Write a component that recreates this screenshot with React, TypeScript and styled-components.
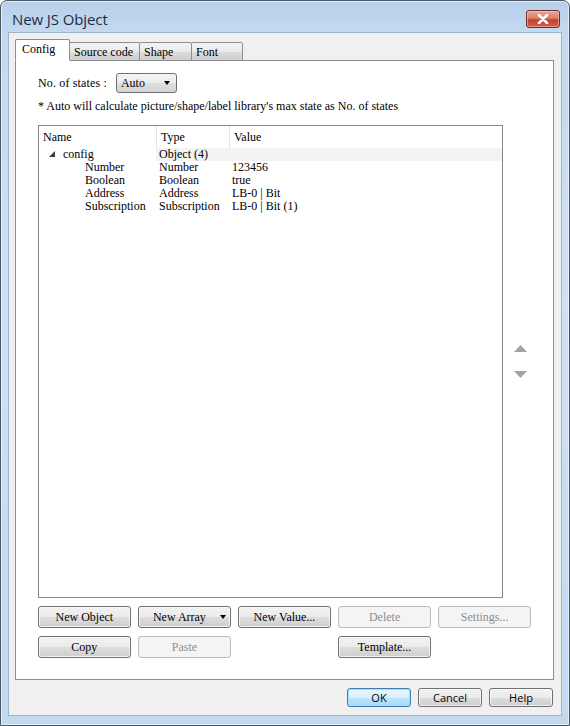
import React from 'react';
import styled, { createGlobalStyle } from 'styled-components';

type Row = {
  name: string;
  type: string;
  value: string;
  depth: number;
  expanded?: boolean;
};

const rows: Row[] = [
  { name: 'config', type: 'Object (4)', value: '', depth: 0, expanded: true },
  { name: 'Number', type: 'Number', value: '123456', depth: 1 },
  { name: 'Boolean', type: 'Boolean', value: 'true', depth: 1 },
  { name: 'Address', type: 'Address', value: 'LB-0 | Bit', depth: 1 },
  { name: 'Subscription', type: 'Subscription', value: 'LB-0 | Bit (1)', depth: 1 },
];

const tabs = ['Config', 'Source code', 'Shape', 'Font'];

const GlobalStyle = createGlobalStyle`
  html, body {
    margin: 0;
    padding: 0;
    overflow: hidden;
    background: #ffffff;
  }
  * {
    box-sizing: border-box;
  }
`;

const App: React.FC = () => {
  return (
    <>
      <GlobalStyle />
      <Window>
        <TitleBar>
          <Title>New JS Object</Title>
          <CloseButton aria-label="Close">
            <svg width="12" height="10" viewBox="0 0 12 10">
              <path
                d="M2 1 L10 9 M10 1 L2 9"
                stroke="#ffffff"
                strokeWidth="2.6"
                strokeLinecap="round"
              />
            </svg>
          </CloseButton>
        </TitleBar>

        <Client>
          <TabStrip>
            {tabs.map((tab, i) => (
              <Tab key={tab} active={i === 0} width={[55, 71, 53, 52][i]}>
                {tab}
              </Tab>
            ))}
          </TabStrip>

          <Panel>
            <StatesRow>
              <Label>No. of states :</Label>
              <Select>
                <span>Auto</span>
                <DropArrow />
              </Select>
            </StatesRow>
            <Note>* Auto will calculate picture/shape/label library's max state as No. of states</Note>

            <ListRow>
              <ListBox>
                <HeaderRow>
                  <NameCol>Name</NameCol>
                  <TypeCol divider>Type</TypeCol>
                  <ValueCol divider>Value</ValueCol>
                </HeaderRow>
                <Rows>
                  {rows.map((row) => (
                    <DataRow key={row.name}>
                      <NameCell depth={row.depth}>
                        {row.expanded && (
                          <Expander width="6" height="6" viewBox="0 0 6 6">
                            <polygon points="0,6 6,0 6,6" fill="#3a3a3a" />
                          </Expander>
                        )}
                        {row.name}
                      </NameCell>
                      <TypeCell shaded={row.depth === 0}>{row.type}</TypeCell>
                      <ValueCell shaded={row.depth === 0}>{row.value}</ValueCell>
                    </DataRow>
                  ))}
                </Rows>
              </ListBox>
              <MoveColumn>
                <svg width="13" height="7" viewBox="0 0 13 7">
                  <polygon points="0,7 6.5,0 13,7" fill="#a3a3a3" />
                </svg>
                <svg width="13" height="7" viewBox="0 0 13 7">
                  <polygon points="0,0 13,0 6.5,7" fill="#a3a3a3" />
                </svg>
              </MoveColumn>
            </ListRow>

            <ButtonGrid>
              <PanelButton>New Object</PanelButton>
              <PanelButton>
                <span>New Array</span>
                <SplitArrow />
              </PanelButton>
              <PanelButton>New Value...</PanelButton>
              <PanelButton disabled>Delete</PanelButton>
              <PanelButton disabled>Settings...</PanelButton>
              <PanelButton>Copy</PanelButton>
              <PanelButton disabled>Paste</PanelButton>
              <Spacer />
              <PanelButton>Template...</PanelButton>
            </ButtonGrid>
          </Panel>

          <Footer>
            <DialogButton primary>OK</DialogButton>
            <DialogButton>Cancel</DialogButton>
            <DialogButton>Help</DialogButton>
          </Footer>
        </Client>
      </Window>
    </>
  );
};

// Window chrome
const Window = styled.div`
  width: 570px;
  height: 726px;
  display: flex;
  flex-direction: column;
  border: 1px solid #4b5866;
  border-radius: 7px 7px 0 0;
  padding: 0 7px 9px 7px;
  background: linear-gradient(
    to bottom,
    #b7cfe9 0px,
    #c4d9ef 30px,
    #cfe1f4 300px,
    #c3d9f0 100%
  );
  box-shadow: inset 0 0 0 1px rgba(255, 255, 255, 0.55);
`;

const TitleBar = styled.div`
  height: 31px;
  flex-shrink: 0;
  display: flex;
  align-items: flex-start;
  justify-content: space-between;
`;

const Title = styled.div`
  padding: 8px 0 0 4px;
  font-family: 'Open Sans', 'Noto Sans', sans-serif;
  font-size: 15px;
  color: #1e2d44;
  letter-spacing: -0.1px;
`;

const CloseButton = styled.div`
  margin: 9px 2px 0 0;
  width: 34px;
  height: 18px;
  display: flex;
  align-items: center;
  justify-content: center;
  border: 1px solid #6e3128;
  border-radius: 3px;
  background: linear-gradient(
    to bottom,
    #e9a99c 0%,
    #d9806f 45%,
    #c4412f 55%,
    #d0604b 100%
  );
  box-shadow: inset 0 0 0 1px rgba(255, 220, 210, 0.45);
`;

const Client = styled.div`
  flex: 1;
  display: flex;
  flex-direction: column;
  background: #f0f0f0;
  border: 1px solid #9fb3ca;
  padding: 5px 7px 0 6px;
`;

// Tabs
const TabStrip = styled.div`
  height: 22px;
  display: flex;
  align-items: flex-end;
  position: relative;
  z-index: 1;
`;

const Tab = styled.div<{ active?: boolean; width: number }>`
  width: ${(p) => p.width}px;
  height: ${(p) => (p.active ? 22 : 19)}px;
  margin-right: -1px;
  padding: ${(p) => (p.active ? '2px 0 0 6px' : '2px 0 0 4px')};
  font-family: 'Liberation Serif', serif;
  font-size: 12px;
  color: #000;
  border: 1px solid #898c95;
  border-bottom: ${(p) => (p.active ? '1px solid #ffffff' : '1px solid #898c95')};
  border-radius: 2px 2px 0 0;
  background: ${(p) =>
    p.active
      ? '#ffffff'
      : 'linear-gradient(to bottom, #f3f3f3 0%, #ebebeb 50%, #dddddd 51%, #cfcfcf 100%)'};
  position: relative;
  z-index: ${(p) => (p.active ? 2 : 1)};
  margin-bottom: -1px;
`;

const Panel = styled.div`
  height: 620px;
  background: #ffffff;
  border: 1px solid #898c95;
  padding: 12px 22px 0 22px;
  font-family: 'Liberation Serif', serif;
  font-size: 12px;
  color: #000;
`;

const StatesRow = styled.div`
  display: flex;
  align-items: center;
  height: 20px;
`;

const Label = styled.span`
  margin-right: 9px;
  letter-spacing: 0.15px;
`;

const Select = styled.div`
  width: 61px;
  height: 20px;
  display: flex;
  align-items: center;
  justify-content: space-between;
  padding: 0 6px 0 4px;
  border: 1px solid #707070;
  border-radius: 3px;
  background: linear-gradient(to bottom, #f4f4f4 0%, #ececec 50%, #dfdfdf 51%, #d3d3d3 100%);
`;

const DropArrow = styled.span`
  width: 0;
  height: 0;
  border-left: 3.5px solid transparent;
  border-right: 3.5px solid transparent;
  border-top: 4px solid #000;
`;

const Note = styled.div`
  margin-top: 6px;
  height: 14px;
  line-height: 14px;
  white-space: nowrap;
`;

// Tree list with the move up / move down arrows beside it
const ListRow = styled.div`
  display: flex;
  margin-top: 12px;
  margin-right: -6px;
`;

const ListBox = styled.div`
  flex: 1;
  height: 473px;
  border: 1px solid #828790;
  background: #ffffff;
`;

const HeaderRow = styled.div`
  display: flex;
  height: 22px;
  line-height: 22px;
`;

const Cell = styled.div<{ divider?: boolean }>`
  white-space: nowrap;
  padding-left: 4px;
  border-left: ${(p) => (p.divider ? '1px solid #e5e5e5' : 'none')};
`;

const NameCol = styled(Cell)`
  width: 117px;
`;

const TypeCol = styled(Cell)`
  width: 73px;
`;

const ValueCol = styled(Cell)`
  flex: 1;
`;

const Rows = styled.div``;

const DataRow = styled.div`
  display: flex;
  height: 13px;
  line-height: 13px;
`;

const NameCell = styled.div<{ depth: number }>`
  width: 117px;
  display: flex;
  align-items: center;
  padding-left: ${(p) => (p.depth === 0 ? 24 : 46)}px;
  position: relative;
`;

const Expander = styled.svg`
  position: absolute;
  left: 10px;
  top: 3px;
`;

const TypeCell = styled.div<{ shaded?: boolean }>`
  width: 74px;
  padding-left: 3px;
  white-space: nowrap;
  background: ${(p) => (p.shaded ? '#f3f3f3' : 'transparent')};
`;

const ValueCell = styled.div<{ shaded?: boolean }>`
  flex: 1;
  padding-left: 2px;
  white-space: nowrap;
  background: ${(p) => (p.shaded ? '#f3f3f3' : 'transparent')};
`;

const MoveColumn = styled.div`
  width: 34px;
  display: flex;
  flex-direction: column;
  align-items: center;
  justify-content: center;
  gap: 19px;
`;

// Buttons
const ButtonGrid = styled.div`
  margin-top: 8px;
  display: grid;
  grid-template-columns: repeat(5, 1fr);
  column-gap: 7.5px;
  row-gap: 8px;
`;

const Spacer = styled.div``;

const PanelButton = styled.button`
  height: 22px;
  display: flex;
  align-items: center;
  justify-content: center;
  gap: 14px;
  padding: 0;
  font-family: 'Liberation Serif', serif;
  font-size: 12px;
  color: #000;
  border: 1px solid #707070;
  border-radius: 3px;
  background: linear-gradient(to bottom, #f2f2f2 0%, #ebebeb 50%, #dddddd 51%, #cfcfcf 100%);
  box-shadow: inset 0 0 0 1px rgba(255, 255, 255, 0.7);

  &:disabled {
    color: #8d8d8d;
    border-color: #b8bcbf;
    background: #f4f4f4;
    box-shadow: none;
  }
`;

const SplitArrow = styled(DropArrow)`
  margin-right: -10px;
`;

const Footer = styled.div`
  flex: 1;
  display: flex;
  justify-content: flex-end;
  align-items: flex-start;
  gap: 7px;
  padding: 8px 1px 0 0;
`;

const DialogButton = styled.button<{ primary?: boolean }>`
  width: 64px;
  height: 19px;
  padding: 0;
  font-family: 'Open Sans', 'Noto Sans', sans-serif;
  font-size: 11px;
  color: #000;
  border: 1px solid ${(p) => (p.primary ? '#3c7fb1' : '#707070')};
  border-radius: 3px;
  background: ${(p) =>
    p.primary
      ? 'linear-gradient(to bottom, #eaf6fd 0%, #d9f0fc 50%, #bee6fd 51%, #a7d9f5 100%)'
      : 'linear-gradient(to bottom, #f2f2f2 0%, #ebebeb 50%, #dddddd 51%, #cfcfcf 100%)'};
  box-shadow: ${(p) =>
    p.primary ? 'inset 0 0 0 1px #9fe0fd' : 'inset 0 0 0 1px rgba(255, 255, 255, 0.7)'};
`;

export default App;
